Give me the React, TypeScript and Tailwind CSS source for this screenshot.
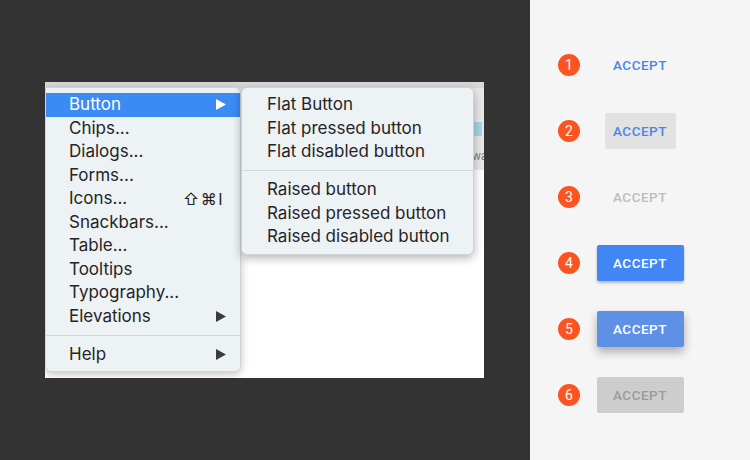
import React from "react";

const menuFont = { fontFamily: "Inter, 'Noto Sans', sans-serif" };

function Arrow({ white }: { white?: boolean }) {
  return (
    <svg width="12" height="13" viewBox="0 0 12 13" className="shrink-0">
      <path d="M1 1 L11 6.5 L1 12 Z" fill={white ? "#ffffff" : "#3a3a3a"} />
    </svg>
  );
}

const mainItems: { label: string; arrow?: boolean; shortcut?: string }[] = [
  { label: "Button", arrow: true },
  { label: "Chips..." },
  { label: "Dialogs..." },
  { label: "Forms..." },
  { label: "Icons...", shortcut: "⇧⌘I" },
  { label: "Snackbars..." },
  { label: "Table..." },
  { label: "Tooltips" },
  { label: "Typography..." },
  { label: "Elevations", arrow: true },
];

function MainMenu() {
  return (
    <div
      className="absolute left-0 top-[5px] w-[196px] rounded-b-[6px] rounded-tr-[6px] border border-[#d0d4d7] bg-[#edf2f5] py-[5px] text-[17px] text-[#252525] shadow-[0_2px_8px_rgba(0,0,0,0.25)]"
      style={menuFont}
    >
      {mainItems.map((it, i) => (
        <div
          key={it.label}
          className={
            "flex h-[23.5px] items-center justify-between pl-[23px] pr-[13px] " +
            (i === 0 ? "bg-[#3b8bf5] text-white" : "")
          }
        >
          <span>{it.label}</span>
          {it.arrow && <Arrow white={i === 0} />}
          {it.shortcut && <span className="pr-[3px] text-[16px] tracking-[1.5px]">{it.shortcut}</span>}
        </div>
      ))}
      <div className="flex h-[14.5px] items-center">
        <div className="h-px w-full bg-[#d3d7da]" />
      </div>
      <div className="flex h-[23.5px] items-center justify-between pl-[23px] pr-[13px]">
        <span>Help</span>
        <Arrow />
      </div>
    </div>
  );
}

function SubMenu() {
  const a = ["Flat Button", "Flat pressed button", "Flat disabled button"];
  const b = ["Raised button", "Raised pressed button", "Raised disabled button"];
  return (
    <div
      className="absolute left-[196px] top-[5px] w-[233px] rounded-[6px] border border-[#cfd3d6] bg-[#edf2f5] py-[5px] text-[17px] text-[#252525] shadow-[0_3px_10px_rgba(0,0,0,0.3)]"
      style={menuFont}
    >
      {a.map((t) => (
        <div key={t} className="flex h-[23.5px] items-center pl-[25px]">
          {t}
        </div>
      ))}
      <div className="flex h-[14.5px] items-center">
        <div className="h-px w-full bg-[#d3d7da]" />
      </div>
      {b.map((t) => (
        <div key={t} className="flex h-[23.5px] items-center pl-[25px]">
          {t}
        </div>
      ))}
    </div>
  );
}

function Screenshot() {
  return (
    <div className="relative h-[296px] w-[439px] overflow-hidden bg-white">
      <div className="h-[6px] bg-[#d9d9d9]" />
      <div className="flex h-[82px] justify-end bg-[#e8e8e8]">
        <div className="flex w-[12px] flex-col items-start justify-end pb-[6px]">
          <div className="mb-[12px] h-[14px] w-[10px] bg-[#a9d3e6]" />
          <span className="text-[11px] text-[#777]" style={menuFont}>
            wa
          </span>
        </div>
      </div>
      <MainMenu />
      <SubMenu />
    </div>
  );
}

type Variant = 1 | 2 | 3 | 4 | 5 | 6;

function AcceptButton({ v }: { v: Variant }) {
  const base =
    "flex h-[36px] items-center justify-center rounded-[2px] text-[13.5px] font-medium tracking-[0.5px]";
  const styles: Record<Variant, string> = {
    1: "w-[71px] text-[#4a86e8]",
    2: "w-[71px] bg-[#e2e2e2] text-[#4a86e8]",
    3: "w-[71px] text-[#bdbdbd]",
    4: "w-[87px] bg-[#4285f4] text-white shadow-[0_2px_3px_rgba(0,0,0,0.25)]",
    5: "w-[87px] bg-[#5e91e6] text-white shadow-[0_5px_10px_rgba(0,0,0,0.3)]",
    6: "w-[87px] bg-[#cdcdcd] text-[#9b9b9b]",
  };
  return (
    <div className={base + " " + styles[v]} style={{ fontFamily: "Roboto, sans-serif" }}>
      ACCEPT
    </div>
  );
}

export default function App() {
  const rows: Variant[] = [1, 2, 3, 4, 5, 6];
  return (
    <div className="flex h-[460px] w-[750px]">
      <div className="h-full w-[530px] bg-[#333333] pl-[45px] pt-[82px]">
        <Screenshot />
      </div>
      <div className="h-full w-[220px] bg-[#f5f5f5] pt-[32px]">
        {rows.map((n) => (
          <div key={n} className="flex h-[66px] items-center pl-[28px]">
            <div
              className="flex h-[22px] w-[22px] items-center justify-center rounded-full bg-[#fc5421] text-[14px] text-white"
              style={{ fontFamily: "Roboto, sans-serif" }}
            >
              {n}
            </div>
            <div className="flex w-[120px] justify-center">
              <AcceptButton v={n} />
            </div>
          </div>
        ))}
      </div>
    </div>
  );
}
